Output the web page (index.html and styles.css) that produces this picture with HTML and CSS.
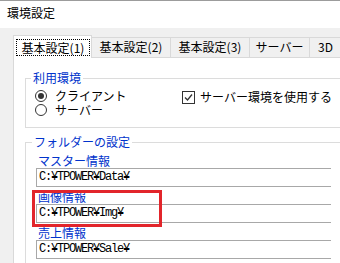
FILE: index.html
```html
<!DOCTYPE html>
<html lang="ja">
<head>
    <meta charset="UTF-8">
    <title>環境設定</title>
    <link rel="stylesheet" href="styles.css">
</head>
<body>

    <div class="titlebar">環境設定</div>

    <div class="content">
        <div class="tabs">
            <div class="tab selected"><span class="focus">基本設定(1)</span></div>
            <div class="tab">基本設定(2)</div>
            <div class="tab">基本設定(3)</div>
            <div class="tab narrow">サーバー</div>
            <div class="tab last">3D</div>
        </div>

        <div class="panel">
            <fieldset class="group env">
                <legend>利用環境</legend>
                <div class="env-row">
                    <div class="radios">
                        <label class="option"><span class="radio checked"></span>クライアント</label>
                        <label class="option"><span class="radio"></span>サーバー</label>
                    </div>
                    <label class="option check-option">
                        <span class="checkbox">
                            <svg width="11" height="11" viewBox="0 0 11 11"><path d="M2 5.5 L4.5 8 L9 2.5" fill="none" stroke="#333" stroke-width="1.3"/></svg>
                        </span>サーバー環境を使用する
                    </label>
                </div>
            </fieldset>

            <fieldset class="group folders">
                <legend>フォルダーの設定</legend>
                <div class="field">
                    <div class="field-label">マスター情報</div>
                    <div class="field-input">C:¥TPOWER¥Data¥</div>
                </div>
                <div class="field">
                    <div class="field-label">画像情報</div>
                    <div class="field-input">C:¥TPOWER¥Img¥</div>
                </div>
                <div class="field">
                    <div class="field-label">売上情報</div>
                    <div class="field-input">C:¥TPOWER¥Sale¥</div>
                </div>
            </fieldset>
        </div>
    </div>

    <!-- 注目枠 -->
    <div class="highlight"></div>

</body>
</html>
```

FILE: styles.css
```css
body {
    margin: 0;
    width: 340px;
    height: 263px;
    overflow: hidden;
    background: #f0f0f0;
    font-family: "Noto Sans CJK JP", sans-serif;
    font-size: 12px;
    color: #000;
    position: relative;
}
.titlebar {
    height: 27px;
    background: #fff;
    border-top: 1px solid #9c9c9c;
    padding-left: 7px;
    line-height: 24px;
}
.content {
    height: 228px;
    overflow: hidden;
    padding: 7px 0 0 13px;
}
.tabs {
    display: flex;
    align-items: flex-end;
    height: 22px;
}
.tab {
    box-sizing: border-box;
    width: 79px;
    height: 20px;
    line-height: 18px;
    text-align: center;
    background: #f0f0f0;
    border-top: 1px solid #d9d9d9;
    border-right: 1px solid #d9d9d9;
    flex-shrink: 0;
}
.tab.narrow {
    width: 60px;
}
.tab.last {
    width: 30px;
    text-align: left;
    padding-left: 8px;
    border-right: none;
}
.tab.selected {
    position: relative;
    z-index: 1;
    height: 23px;
    margin-bottom: -1px;
    background: #fff;
    border-left: 1px solid #d9d9d9;
    padding: 3px 1px 0 2px;
}
.focus {
    display: block;
    height: 17px;
    line-height: 16px;
    box-sizing: border-box;
    border: 1px dotted #000;
}
.panel {
    width: 316px;
    height: 300px;
    background: #fff;
    border: 1px solid #d9d9d9;
    border-right: none;
    padding-left: 11px;
}
.group {
    margin: 0;
    border: 1px solid #dcdcdc;
    border-right: none;
    min-width: 0;
}
.group legend {
    padding: 0 2px;
    margin-left: -4px;
    line-height: 14px;
    color: #0033cc;
}
.env {
    margin-top: 13px;
    padding: 4px 0 10px 9px;
}
.env-row {
    display: flex;
}
.radios {
    width: 147px;
}
.option {
    display: flex;
    align-items: center;
    height: 14px;
    line-height: 14px;
}
.radio {
    box-sizing: border-box;
    width: 12px;
    height: 12px;
    border: 1px solid #333;
    border-radius: 50%;
    margin-right: 8px;
    display: flex;
    align-items: center;
    justify-content: center;
}
.radio.checked::after {
    content: "";
    width: 6px;
    height: 6px;
    border-radius: 50%;
    background: #333;
}
.check-option {
    height: 16px;
}
.checkbox {
    box-sizing: border-box;
    width: 13px;
    height: 13px;
    border: 1px solid #333;
    margin-right: 5px;
    display: flex;
    align-items: center;
    justify-content: center;
}
.folders {
    margin-top: 7px;
    padding: 5px 0 10px 10px;
}
.field + .field {
    margin-top: 3px;
}
.field-label {
    line-height: 14px;
    padding-left: 2px;
    color: #0033cc;
}
.field-input {
    box-sizing: border-box;
    width: 295px;
    height: 19px;
    border: 1px solid #a8a8a8;
    border-right: none;
    padding-left: 2px;
    line-height: 17px;
    font-family: "Liberation Mono", monospace;
    font-size: 12px;
    letter-spacing: -1.2px;
}
.highlight {
    position: absolute;
    left: 32px;
    top: 190px;
    width: 130px;
    height: 37px;
    box-sizing: border-box;
    border: 3px solid #e2252b;
}
```
